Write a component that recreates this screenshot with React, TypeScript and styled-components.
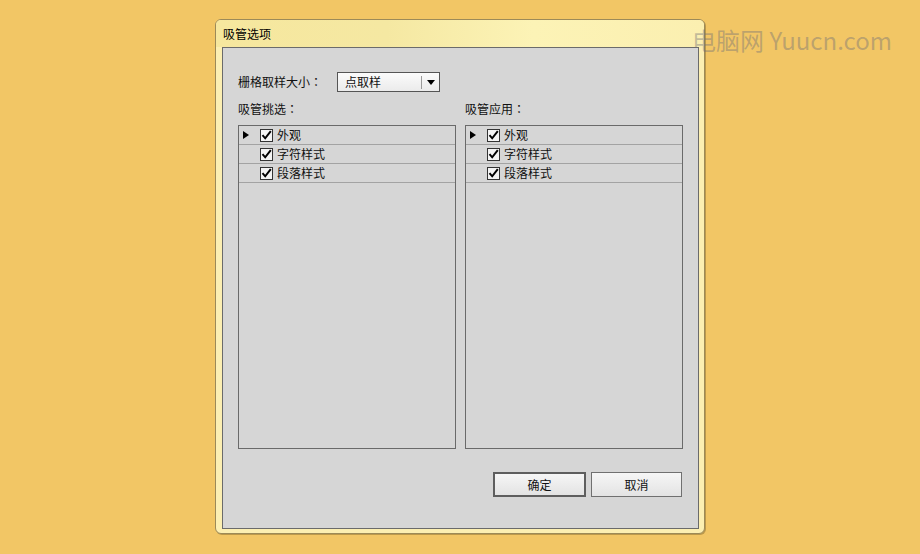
import React from "react";
import styled, { createGlobalStyle } from "styled-components";

const Global = createGlobalStyle`
  html, body { margin: 0; padding: 0; background: #f2c665; }
  body { font-family: "Noto Sans CJK SC", "Noto Sans", sans-serif; }
  #root { min-height: 554px; }
`;

const Page = styled.div`
  position: relative;
  width: 920px;
  height: 554px;
  box-sizing: border-box;
  padding: 19px 0 0 215px;
  background: #f2c665;
  overflow: hidden;
`;

const Watermark = styled.div`
  position: absolute;
  left: 692px;
  top: 23px;
  font-family: "Noto Sans CJK SC", "Noto Sans", sans-serif;
  font-size: 24px;
  line-height: 34px;
  color: rgba(110, 110, 120, 0.42);
  white-space: nowrap;
`;

const Window = styled.div`
  width: 490px;
  height: 515px;
  box-sizing: border-box;
  border: 1px solid #9c8a58;
  border-radius: 6px;
  background: #fcefb2;
  display: flex;
  flex-direction: column;
  box-shadow: 1px 1px 0 rgba(90, 70, 30, 0.35);
`;

const TitleBar = styled.div`
  height: 27px;
  flex: none;
  display: flex;
  align-items: center;
  padding-left: 7px;
  padding-bottom: 1px;
  box-sizing: border-box;
  border-radius: 5px 5px 0 0;
  background: linear-gradient(to right, #f6e79e 0%, #f5e8a2 35%, #fcf3b6 65%, #fbefb0 100%);
  font-size: 12px;
  color: #000;
`;

const Panel = styled.div`
  flex: 1;
  margin: 0 5px 4px 6px;
  border: 1px solid #6b6b6b;
  background: #d6d6d6;
  padding: 24px 15px 0;
  display: flex;
  flex-direction: column;
  font-size: 12px;
  color: #111;
`;

const SizeRow = styled.div`
  height: 20px;
  display: flex;
  align-items: center;
`;

const FieldLabel = styled.span`
  width: 99px;
  line-height: 16px;
`;

const Colon = styled.span`
  font-family: "Noto Sans CJK TC", "Noto Sans CJK SC", sans-serif;
`;

const Dropdown = styled.div`
  width: 103px;
  height: 20px;
  box-sizing: border-box;
  border: 1px solid #555;
  background: linear-gradient(#fbfbfb, #ebebeb);
  display: flex;
  align-items: center;
`;

const DropText = styled.span`
  flex: 1;
  padding-left: 7px;
  line-height: 16px;
`;

const DropDivider = styled.span`
  width: 1px;
  height: 13px;
  background: #9a9a9a;
`;

const DropArrow = styled.span`
  width: 17px;
  display: flex;
  justify-content: center;
  align-items: center;
`;

const Columns = styled.div`
  margin-top: 9px;
  display: grid;
  grid-template-columns: 218px 218px;
  column-gap: 9px;
`;

const Column = styled.div`
  display: flex;
  flex-direction: column;
`;

const SectionLabel = styled.div`
  height: 16px;
  line-height: 16px;
`;

const ListBox = styled.div`
  margin-top: 8px;
  height: 324px;
  box-sizing: border-box;
  border: 1px solid #6a6a6a;
`;

const Row = styled.div`
  height: 18px;
  border-bottom: 1px solid #a3a3a3;
  display: flex;
  align-items: center;
`;

const ArrowSlot = styled.span`
  width: 21px;
  height: 18px;
  display: flex;
  align-items: center;
  padding-left: 4px;
  box-sizing: border-box;
`;

const Check = styled.span`
  width: 13px;
  height: 13px;
  box-sizing: border-box;
  border: 1px solid #333;
  background: #f4f4f4;
  display: flex;
  align-items: center;
  justify-content: center;
  margin-right: 4px;
`;

const RowText = styled.span`
  line-height: 16px;
`;

const ButtonRow = styled.div`
  margin-top: 23px;
  display: flex;
  justify-content: flex-end;
  gap: 5px;
  padding-right: 1px;
`;

const Button = styled.div<{ $primary?: boolean; $w: number }>`
  width: ${(p) => p.$w}px;
  height: 25px;
  box-sizing: border-box;
  border: ${(p) => (p.$primary ? "2px solid #5e5e5e" : "1px solid #707070")};
  background: linear-gradient(#f6f6f6, #e3e3e3);
  display: flex;
  align-items: center;
  justify-content: center;
  font-size: 12px;
  color: #111;
`;

const Triangle = () => (
  <svg width="6" height="8" viewBox="0 0 6 8">
    <path d="M0 0 L6 4 L0 8 Z" fill="#000" />
  </svg>
);

const CheckMark = () => (
  <svg width="11" height="11" viewBox="0 0 11 11">
    <path d="M1.5 5.2 L4.2 8.3 L9.8 1.2" fill="none" stroke="#000" strokeWidth="2" />
  </svg>
);

const items = [
  { label: "外观", arrow: true },
  { label: "字符样式", arrow: false },
  { label: "段落样式", arrow: false },
];

const List = () => (
  <ListBox>
    {items.map((it) => (
      <Row key={it.label}>
        <ArrowSlot>{it.arrow && <Triangle />}</ArrowSlot>
        <Check>
          <CheckMark />
        </Check>
        <RowText>{it.label}</RowText>
      </Row>
    ))}
  </ListBox>
);

export default function App() {
  return (
    <Page>
      <Global />
      <Window>
        <TitleBar>吸管选项</TitleBar>
        <Panel>
          <SizeRow>
            <FieldLabel>
              栅格取样大小<Colon>：</Colon>
            </FieldLabel>
            <Dropdown>
              <DropText>点取样</DropText>
              <DropDivider />
              <DropArrow>
                <svg width="8" height="5" viewBox="0 0 8 5">
                  <path d="M0 0 H8 L4 5 Z" fill="#000" />
                </svg>
              </DropArrow>
            </Dropdown>
          </SizeRow>
          <Columns>
            <Column>
              <SectionLabel>
                吸管挑选<Colon>：</Colon>
              </SectionLabel>
              <List />
            </Column>
            <Column>
              <SectionLabel>
                吸管应用<Colon>：</Colon>
              </SectionLabel>
              <List />
            </Column>
          </Columns>
          <ButtonRow>
            <Button $primary $w={93}>确定</Button>
            <Button $w={91}>取消</Button>
          </ButtonRow>
        </Panel>
      </Window>
      <Watermark>电脑网 Yuucn.com</Watermark>
    </Page>
  );
}
